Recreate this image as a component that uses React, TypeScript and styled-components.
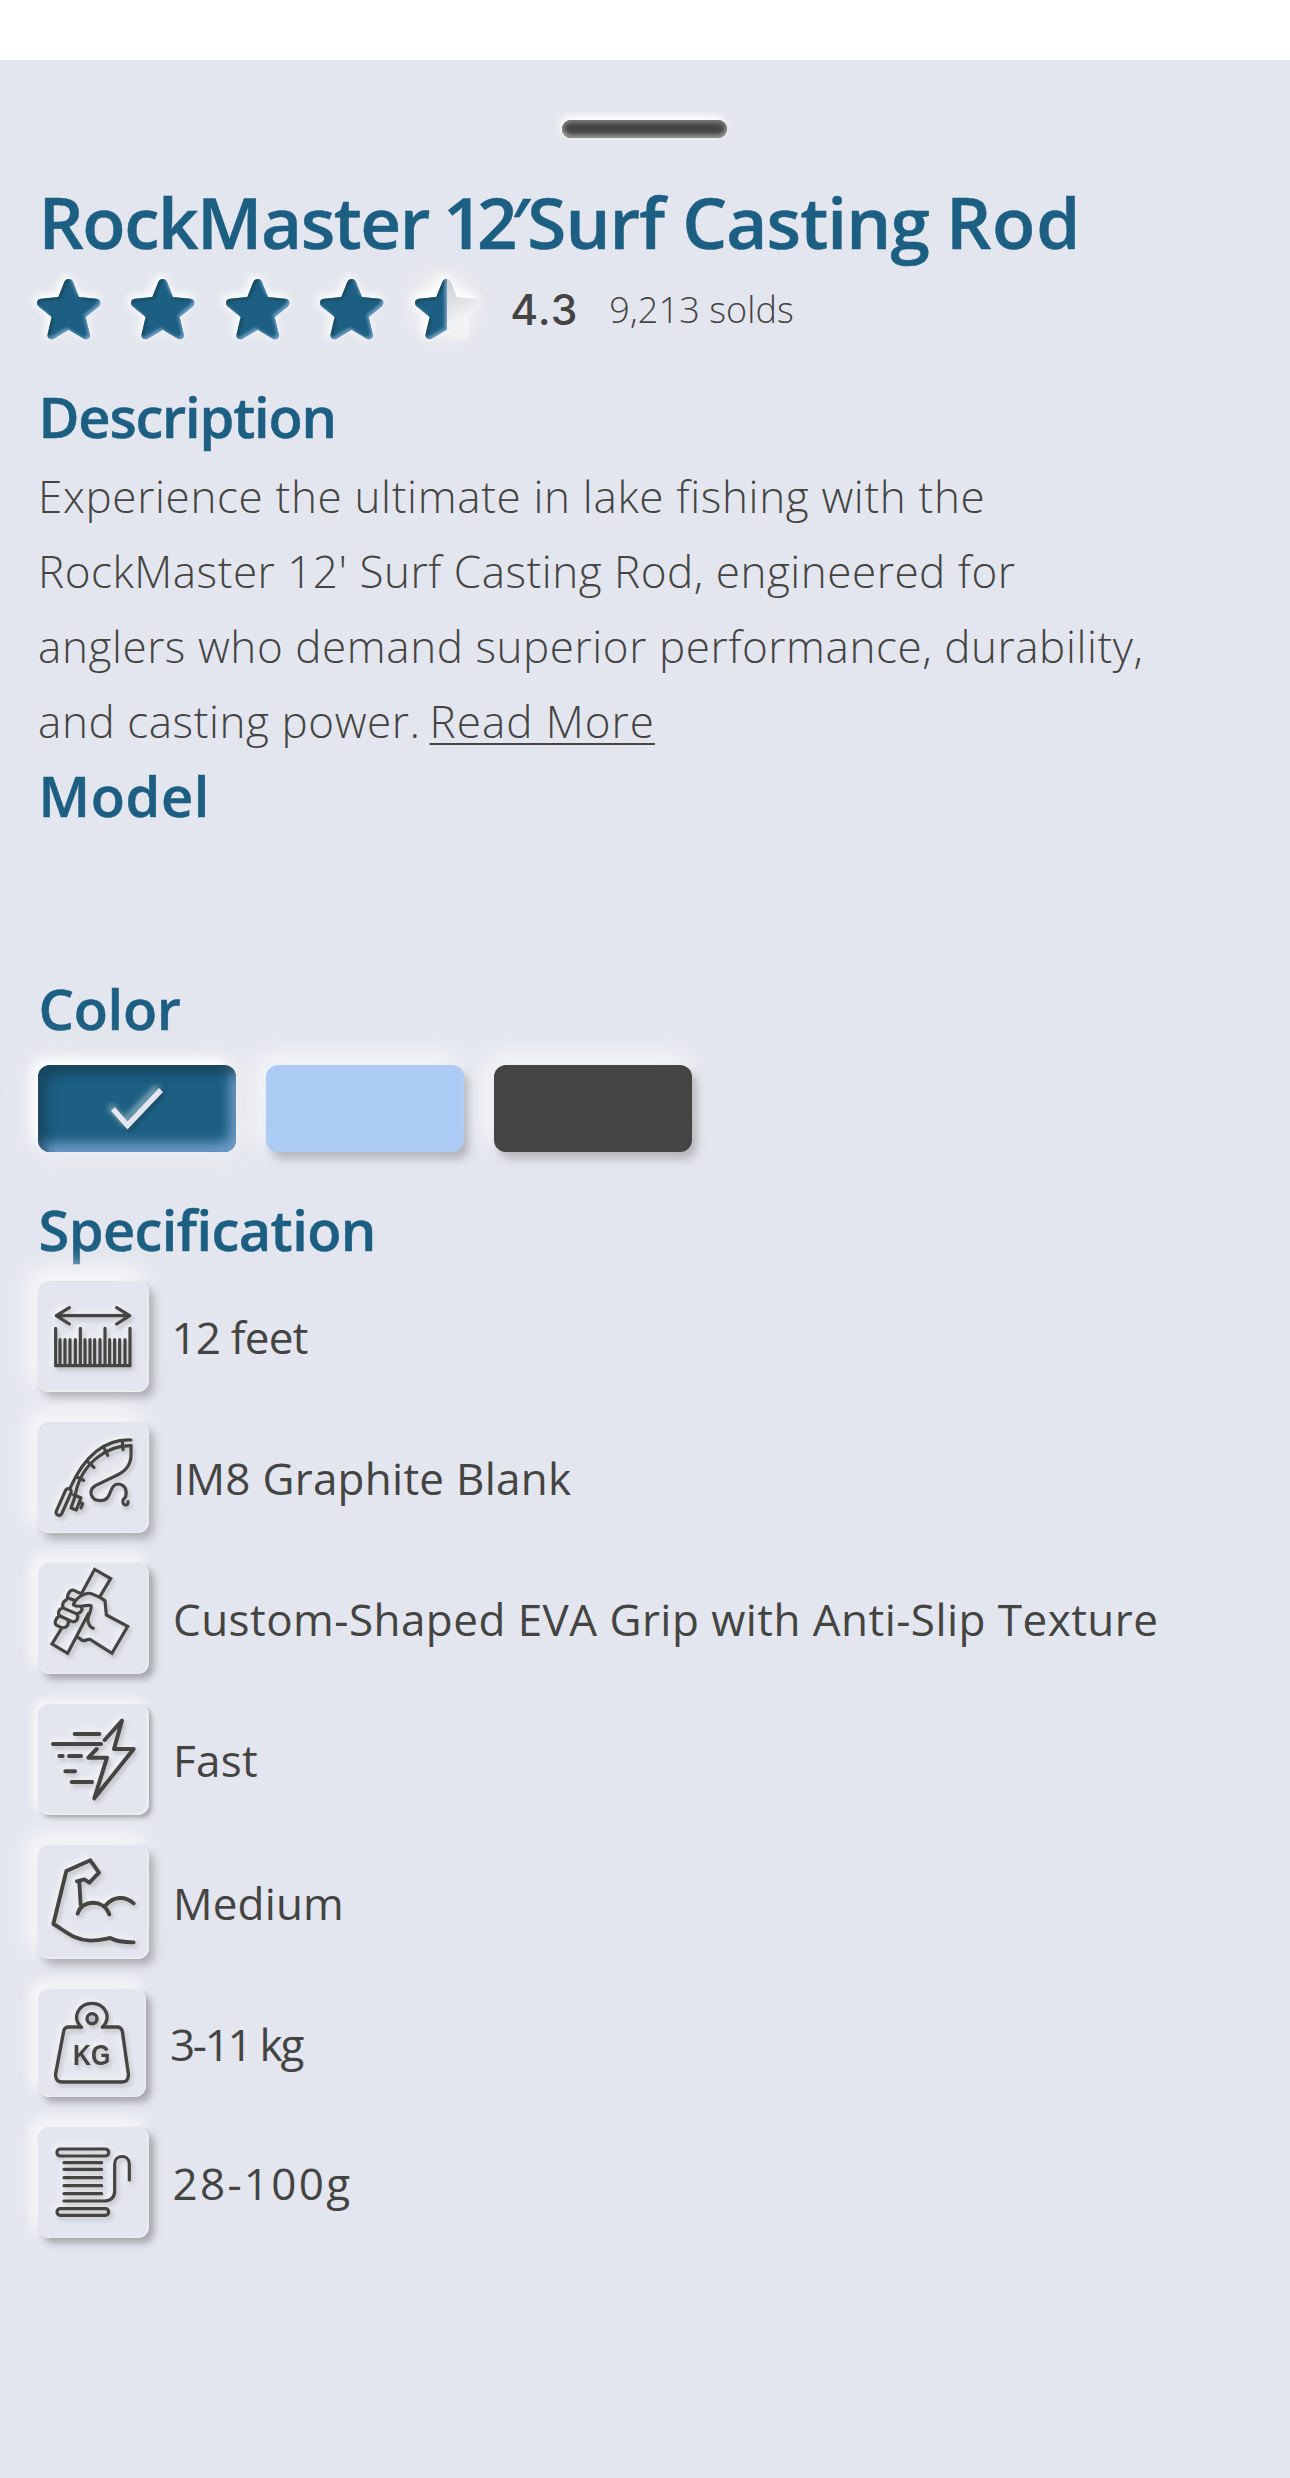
import React from "react";
import styled, { createGlobalStyle } from "styled-components";

const ink = "#444443";
const blue = "#1c5f82";
const surface = "#e3e6ee";

const GlobalStyle = createGlobalStyle`
  body { margin: 0; background: #fff; font-family: "Open Sans", "Noto Sans", sans-serif; color: ${ink}; }
  h1, h2, p, ul { margin: 0; padding: 0; font-weight: inherit; }
`;

const Page = styled.main`
  padding-top: 60px;
  background: linear-gradient(#fff 0, #fff 40px, #fdfdfd 60px, #fff 60px);
`;

const Sheet = styled.section`
  box-sizing: border-box;
  width: 1290px;
  height: 2418px;
  padding: 60px 38px 0;
  background: ${surface};
  display: flex;
  flex-direction: column;
`;

const Handle = styled.div`
  align-self: center;
  width: 165px;
  height: 18px;
  margin-right: 1px;
  border-radius: 9px;
  background: #444;
  box-shadow: inset 0 -3px 5px #9a9a9a, inset 0 3px 5px #747678, inset 0 0 4px #777,
    -2px -4px 8px #fff, 0 0 8px rgba(240, 240, 240, 0.8);
`;

const Title = styled.h1`
  display: flex;
  margin-top: 44px;
  height: 80px;
  font-size: 71px;
  line-height: 80px;
  font-weight: 600;
  color: ${blue};
  -webkit-text-stroke: 0.5px ${blue};
  white-space: nowrap;
`;

const Word = styled.span<{ $track: number; $before?: number }>`
  letter-spacing: ${(p) => p.$track}px;
  margin-left: ${(p) => p.$before ?? 0}px;
`;

const RatingRow = styled.div`
  display: flex;
  align-items: center;
  height: 60px;
  margin-top: 17px;
`;

const Stars = styled.div`
  display: flex;
  gap: 31.1px;
  margin-left: -1px;
`;

const StarSvg = styled.svg`
  width: 63.3px;
  height: 60.3px;
  overflow: visible;
  flex: none;
`;

const Score = styled.span`
  margin-left: 32.5px;
  width: 99px;
  font-family: Inter, "Open Sans", sans-serif;
  font-size: 42.5px;
  font-weight: 500;
  letter-spacing: 1px;
`;

const Sold = styled.span`
  font-size: 36px;
  font-weight: 300;
  letter-spacing: 0.1px;
  white-space: nowrap;
`;

const Heading = styled.h2<{ $top: number; $track: number }>`
  margin-top: ${(p) => p.$top}px;
  padding-left: 0.5px;
  height: 64px;
  line-height: 64px;
  font-size: 56px;
  font-weight: 600;
  letter-spacing: ${(p) => p.$track}px;
  color: ${blue};
  -webkit-text-stroke: 0.5px ${blue};
`;

const Copy = styled.p`
  margin-top: 10.5px;
  height: 300px;
  font-size: 44px;
  line-height: 75px;
  font-weight: 300;
`;

const CopyLine = styled.span<{ $track: number }>`
  display: block;
  white-space: nowrap;
  letter-spacing: ${(p) => p.$track}px;
`;

const More = styled.a`
  display: inline-block;
  margin-left: -3px;
  line-height: 75px;
  letter-spacing: 1px;
  text-decoration: underline;
  text-decoration-thickness: 2px;
  text-underline-offset: 5px;
  text-decoration-skip-ink: none;
`;

const Swatches = styled.div`
  display: flex;
  gap: 30px;
  margin-top: 25.500px;
  margin-left: -0.5px;
`;

const Swatch = styled.button<{ $color: string; $selected?: boolean }>`
  width: 198px;
  height: 87px;
  padding: 0;
  border: 0;
  border-radius: 12px;
  background: ${(p) => p.$color};
  box-shadow: ${(p) =>
    p.$selected
      ? "inset 8px 9px 12px rgba(20, 55, 75, 0.65), inset -6px -9px 12px #6e9bc9, -6px -6px 14px #fff, 0 0 30px 10px rgba(240, 240, 240, 0.7)"
      : "5px 7px 9px rgba(150, 148, 152, 0.6), -7px -9px 24px 4px rgba(250, 250, 250, 0.8)"};
`;

const Check = styled.svg`
  display: block;
  width: 198px;
  height: 87px;
  overflow: visible;
  filter: drop-shadow(-3px -3px 3px rgba(220, 240, 245, 0.65)) drop-shadow(2px 2px 2px rgba(20, 40, 60, 0.45));
`;

const SpecList = styled.ul`
  display: flex;
  flex-direction: column;
  gap: 30px;
  margin-top: 20px;
  margin-left: -0.5px;
  list-style: none;
`;

const Spec = styled.li`
  display: flex;
  align-items: center;
  gap: 24.5px;
`;

const depths = {
  deep: "5px 6px 9px rgba(135, 135, 140, 0.6), -8px -9px 22px 4px rgba(250, 250, 250, 0.85), inset -1px -1px 2px rgba(255, 255, 255, 0.45)",
  mid: "5px 5px 7px rgba(130, 130, 135, 0.65), -6px -7px 14px 2px rgba(252, 252, 252, 0.85), inset -1px -1px 2px rgba(255, 255, 255, 0.4)",
  thin: "3px 3px 4px rgba(130, 130, 135, 0.65), -3px -3px 8px 2px rgba(252, 252, 252, 0.85), inset -2px -2px 3px rgba(255, 255, 255, 0.4)",
};

const Tile = styled.div<{ $w: number; $h: number; $depth: keyof typeof depths }>`
  flex: none;
  width: ${(p) => p.$w}px;
  height: ${(p) => p.$h}px;
  border-radius: 11px;
  background: ${surface};
  box-shadow: ${(p) => depths[p.$depth]};
`;

const Icon = styled.svg`
  display: block;
  width: 100%;
  height: 100%;
  fill: none;
  stroke: ${ink};
  stroke-linecap: round;
  stroke-linejoin: round;
  filter: drop-shadow(2px 3px 2px rgba(110, 105, 110, 0.35)) drop-shadow(-2px -2px 3px rgba(255, 255, 255, 0.75));
`;

const SpecText = styled.span<{ $track: number; $shift?: number }>`
  position: relative;
  margin-left: ${(p) => p.$shift ?? 0}px;
  padding-top: 1px;
  font-size: 44px;
  line-height: 60px;
  letter-spacing: ${(p) => p.$track}px;
  white-space: nowrap;
`;

const starPath =
  "M95 0Q104 0 108 9L126 54L178 59Q190 60 190 72Q190 78 184 83L146 114L158 165Q161 180 146 181Q142 181 138 178L95 152L52 178Q48 181 44 181Q29 180 32 165L44 114L6 83Q0 78 0 72Q0 60 12 59L64 54L82 9Q86 0 95 0Z";
const halfStarPath =
  "M95 0V152L52 178Q48 181 44 181Q29 180 32 165L44 114L6 83Q0 78 0 72Q0 60 12 59L64 54L82 9Q86 0 95 0Z";

const Star = ({ half }: { half?: boolean }) => (
  <StarSvg viewBox="0 0 190 181">
    <defs>
      <filter id="star-inset" x="-30%" y="-30%" width="160%" height="160%" colorInterpolationFilters="sRGB">
        <feGaussianBlur in="SourceAlpha" stdDeviation="5" result="soft" />
        <feOffset in="soft" dx="6" dy="6" result="down" />
        <feComposite in="SourceAlpha" in2="down" operator="out" result="upperEdge" />
        <feFlood floodColor="#174257" floodOpacity="0.75" />
        <feComposite in2="upperEdge" operator="in" result="dark" />
        <feOffset in="soft" dx="-5" dy="-5" result="up" />
        <feComposite in="SourceAlpha" in2="up" operator="out" result="lowerEdge" />
        <feFlood floodColor="#86b0d8" floodOpacity="0.75" />
        <feComposite in2="lowerEdge" operator="in" result="light" />
        <feMerge>
          <feMergeNode in="SourceGraphic" />
          <feMergeNode in="dark" />
          <feMergeNode in="light" />
        </feMerge>
      </filter>
      <filter id="star-halo" x="-60%" y="-60%" width="220%" height="220%">
        <feGaussianBlur stdDeviation="13" />
      </filter>
      <linearGradient id="empty-half" x1="0" y1="0" x2="0.5" y2="1">
        <stop offset="0" stopColor="#cbccd0" />
        <stop offset="0.45" stopColor="#d9dadd" />
        <stop offset="0.8" stopColor="#f0f1f2" />
      </linearGradient>
      <radialGradient id="wide-halo">
        <stop offset="0.3" stopColor="#f8f8f8" />
        <stop offset="0.65" stopColor="#ececee" stopOpacity="0.8" />
        <stop offset="1" stopColor="#e4e6ea" stopOpacity="0" />
      </radialGradient>
    </defs>
    {half && <circle cx="86" cy="82" r="155" fill="url(#wide-halo)" />}
    <path d={starPath} fill="#fff" stroke="#fff" strokeWidth="8" transform="translate(-6 -8)" filter="url(#star-halo)" />
    {half && <path d={starPath} fill="url(#empty-half)" />}
    <path d={half ? halfStarPath : starPath} fill={blue} filter="url(#star-inset)" />
  </StarSvg>
);

type SpecItem = {
  label: string;
  track: number;
  shift?: number;
  w?: number;
  h?: number;
  depth: keyof typeof depths;
  box: string;
  stroke: number;
  art: React.ReactNode;
};

const specs: SpecItem[] = [
  {
    label: "12 feet", track: -0.8, shift: -1.5, depth: "deep", box: "53 63 333 333", stroke: 9.5,
    art: (
      <>
        <path d="M108 167H328M147 143L108 167L147 192M289 143L328 167L289 192M106 205V317H329V205M180 205V315M254 205V315" />
        <path d="M119 239V312M134 239V312M149 239V312M165 239V312M194 239V312M209 239V312M223 239V312M239 239V312M268 239V312M283 239V312M298 239V312M314 239V312" />
      </>
    ),
  },
  {
    label: "IM8 Graphite Blank", track: 0.25, depth: "deep", box: "53 51 333 333", stroke: 9.5,
    art: (
      <>
        <path d="M332 105C255 102 194 150 150 248M332 122C262 121 184 172 165 268" />
        <path d="M332 122V150C332 182 313 201 285 213L225 242C202 257 211 287 241 287C277 287 264 238 294 237C314 238 321 256 316 275L308 285C304 303 325 305 323 290" />
        <rect x="121" y="248" width="18" height="86" rx="9" transform="rotate(24 130 291)" />
        <path d="M306 108L308 134M252 130L262 151M202 170L221 187M170 216L190 226M160 270L182 278L168 315L152 309L163 278M178 291L187 296L182 309" />
      </>
    ),
  },
  {
    label: "Custom-Shaped EVA Grip with Anti-Slip Texture", track: 0.46, depth: "mid", box: "53 54 333 333", stroke: 9.5,
    art: (
      <>
        <path strokeLinejoin="miter" d="M184 145L223 73L271 101L239 154M125 248L95 297L142 325L204 206M239 157L254 167L258 210L322 244L275 325L209 283" />
        <path d="M209 283C196 282 200 288 187 287L174 278M239 157L213 146C194 140 166 160 159 179C174 191 190 178 212 182C216 202 194 218 205 235C208 245 213 248 219 250" />
        <path d="M182 146L161 136C149 133 143 145 141 158L162 166M138 165C126 169 124 185 131 190L166 205C180 208 189 194 183 186M127 189C114 192 111 207 119 213L156 230C170 232 177 216 169 207M117 213C106 219 100 236 109 241L124 248C139 250 147 239 143 226" />
      </>
    ),
  },
  {
    label: "Fast", track: 0.3, depth: "thin", box: "53 57 333 333", stroke: 12,
    art: (
      <path d="M163 147H237M98 177H242M117 213H127M146 213H182M135 259H164M154 291H215M253 165L305 107L281 192H340L222 340L260 218H204L229 192" />
    ),
  },
  {
    label: "Medium", track: 0.15, h: 114, depth: "deep", box: "53 60 333 342", stroke: 11.5,
    art: (
      <path d="M340 235C314 212 280 213 255 242M172 266C182 224 251 220 267 268M181 240L177 170M170 169L192 163L207 173L236 143L210 106L138 138L99 297C135 317 158 345 210 347C245 347 260 340 270 339C290 351 312 352 340 352" />
    ),
  },
  {
    label: "3-11 kg", track: -2.3, w: 108, h: 108, depth: "mid", box: "53 71 324 324", stroke: 10,
    art: (
      <>
        <path d="M183 185H146Q132 185 130 198L106 325Q104 350 126 350H304Q326 350 324 325L306 198Q303 185 290 185H246M183 186C152 154 178 114 215 114C252 114 277 154 246 186" />
        <circle cx="215" cy="160" r="15" fill="#b9bbbe" />
        <text x="158" y="300" textLength="112" lengthAdjust="spacingAndGlyphs" fontFamily="Liberation Sans, Arial, sans-serif" fontWeight="700" fontSize="91" fill={ink} stroke="none">
          KG
        </text>
      </>
    ),
  },
  {
    label: "28-100g", track: 2.3, shift: -0.5, depth: "mid", box: "53 65 333 333", stroke: 9.5,
    art: (
      <>
        <rect x="110" y="131" width="155" height="21" rx="10" />
        <rect x="110" y="310" width="155" height="20" rx="10" />
        <path d="M131 172H244M131 192H244M131 217H244M131 241H244M131 265H244M131 287H253Q283 285 283 257V176C283 146 327 146 327 176V224" />
      </>
    ),
  },
];

export default function App() {
  return (
    <Page>
      <GlobalStyle />
      <Sheet>
        <Handle />
        <Title>
          <Word $track={-1.5} $before={0.5}>RockMaster</Word>
          <Word $track={-6.6} $before={14}>12′</Word>
          <Word $track={-0.9} $before={4}>Surf</Word>
          <Word $track={-0.9} $before={18}>Casting</Word>
          <Word $track={0.8} $before={17}>Rod</Word>
        </Title>
        <RatingRow>
          <Stars>
            <Star />
            <Star />
            <Star />
            <Star />
            <Star half />
          </Stars>
          <Score>4.3</Score>
          <Sold>9,213 solds</Sold>
        </RatingRow>

        <Heading $top={45} $track={-1.2}>Description</Heading>
        <Copy>
          <CopyLine $track={0.66}>Experience the ultimate in lake fishing with the</CopyLine>
          <CopyLine $track={0.53}>RockMaster 12' Surf Casting Rod, engineered for</CopyLine>
          <CopyLine $track={0.58}>anglers who demand superior performance, durability,</CopyLine>
          <CopyLine $track={0.58}>
            and casting power. <More>Read More</More>
          </CopyLine>
        </Copy>

        <Heading $top={4} $track={0.6}>Model</Heading>

        <Heading $top={149} $track={-0.3}>Color</Heading>
        <Swatches>
          <Swatch $color={blue} $selected>
            <Check viewBox="0 0 198 87">
              <path d="M75 44L89.500 60.500L123 25" fill="none" stroke={surface} strokeWidth="5.500" />
            </Check>
          </Swatch>
          <Swatch $color="#accbf4" />
          <Swatch $color="#444444" />
        </Swatches>

        <Heading $top={45} $track={-0.6}>Specification</Heading>
        <SpecList>
          {specs.map((s) => (
            <Spec key={s.label}>
              <Tile $w={s.w ?? 111} $h={s.h ?? 111} $depth={s.depth}>
                <Icon viewBox={s.box} strokeWidth={s.stroke}>{s.art}</Icon>
              </Tile>
              <SpecText $track={s.track} $shift={s.shift}>{s.label}</SpecText>
            </Spec>
          ))}
        </SpecList>
      </Sheet>
    </Page>
  );
}
